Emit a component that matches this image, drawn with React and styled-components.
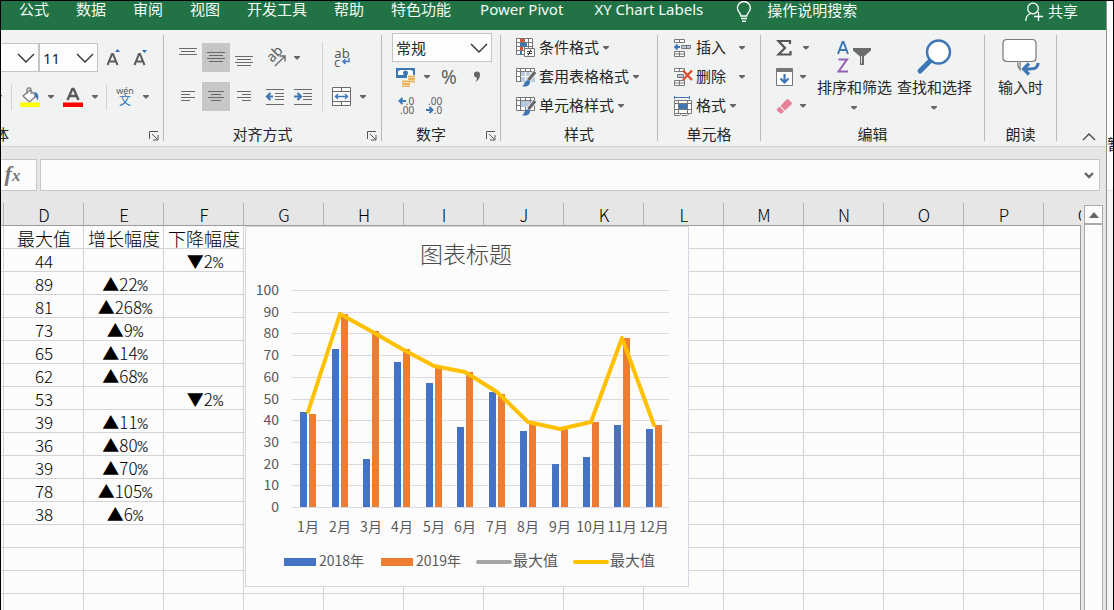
import React, { useState } from "react";
import styled, { createGlobalStyle, css } from "styled-components";

const tabs = ["公式", "数据", "审阅", "视图", "开发工具", "帮助", "特色功能"];
const addIns = ["Power Pivot", "XY Chart Labels"];

const columns = ["D", "E", "F", "G", "H", "I", "J", "K", "L", "M", "N", "O", "P", "Q"];

const months = [
  { name: "1月", y2018: 44, y2019: 43, max: 44, down: "2" },
  { name: "2月", y2018: 73, y2019: 89, max: 89, up: "22" },
  { name: "3月", y2018: 22, y2019: 81, max: 81, up: "268" },
  { name: "4月", y2018: 67, y2019: 73, max: 73, up: "9" },
  { name: "5月", y2018: 57, y2019: 65, max: 65, up: "14" },
  { name: "6月", y2018: 37, y2019: 62, max: 62, up: "68" },
  { name: "7月", y2018: 53, y2019: 52, max: 53, down: "2" },
  { name: "8月", y2018: 35, y2019: 39, max: 39, up: "11" },
  { name: "9月", y2018: 20, y2019: 36, max: 36, up: "80" },
  { name: "10月", y2018: 23, y2019: 39, max: 39, up: "70" },
  { name: "11月", y2018: 38, y2019: 78, max: 78, up: "105" },
  { name: "12月", y2018: 36, y2019: 38, max: 38, up: "6" },
];

const emptyRows = 7;

/* ---------- icons ---------- */

const Caret = () => (
  <svg width="6" height="4" viewBox="0 0 6 4">
    <path d="M0 0h6v1L3.5 3.5h-1L0 1z" fill="#666" />
  </svg>
);

const Chevron = () => (
  <svg width="18" height="10" viewBox="0 0 18 10">
    <path d="M1 1l8 8 8-8" fill="none" stroke="#333" strokeWidth="1.4" />
  </svg>
);

// lines: [x1, x2, y]
const Lines = ({ lines, size = 20 }) => (
  <svg width={size} height="20" viewBox="0 0 20 20">
    {lines.map(([x1, x2, y]) => (
      <path key={y} d={`M${x1} ${y}.5H${x2}`} stroke="#6a6a6a" />
    ))}
  </svg>
);

const LauncherIcon = () => (
  <svg width="10" height="10" viewBox="0 0 10 10" fill="none" stroke="#555">
    <path d="M.5 8V.5H9M3 3l5.5 5.5M9 4v5H4" />
  </svg>
);

const BulbIcon = () => (
  <svg width="16" height="22" viewBox="0 0 16 22" fill="none" stroke="#fff" strokeWidth="1.4">
    <path d="M5 15c0-3-3.6-4-3.6-8a6.5 6.5 0 0 1 13 0c0 4-3.600 5-3.600 8zM5 17.500h6M6 20.300h4" />
  </svg>
);

const PersonIcon = () => (
  <svg width="18" height="20" viewBox="0 0 18 20" fill="none" stroke="#fff" strokeWidth="1.3">
    <circle cx="8" cy="7.500" r="5.300" />
    <path d="M.8 20c0-4 2-6.500 4.700-7.500M13.500 11v9M9 15.500h9" />
  </svg>
);

const FontSizeIcon = ({ grow }) => (
  <svg width="15" height="20" viewBox="0 0 15 20">
    <path d="M1.500 17L6 6h1l4.500 11M3.300 13.500h6.500" fill="none" stroke="#5c5c5c" strokeWidth="2" />
    <path d={grow ? "M9 4l2.500-3L14 4z" : "M9 2h5l-2.500 3z"} fill="#2f6fb5" />
  </svg>
);

const BucketIcon = () => (
  <svg width="20" height="20" viewBox="0 0 20 20">
    <path d="M3 9l7-6 6 6-6.500 6z" fill="#fff" stroke="#777" strokeWidth="1.200" />
    <path d="M7 7V2.500C7 .3 11 .3 11 2.500V7" fill="none" stroke="#777" strokeWidth="1.200" />
    <path d="M14 5c4 0 5.500 4 3.500 9-.5-3-1.500-4-3.500-4.500l1.500-1z" fill="#3f77b5" />
    <path d="M0 15.500h20v4.500H0z" fill="#ff0" />
  </svg>
);

const FontColorIcon = () => (
  <svg width="20" height="20" viewBox="0 0 20 20">
    <path d="M4.500 13L9.300 2h1.400l4.800 11M6.500 9h7" fill="none" stroke="#5a5a5a" strokeWidth="2.400" />
    <path d="M0 15.500h20v4.500H0z" fill="red" />
  </svg>
);

const OrientationIcon = () => (
  <svg width="20" height="20" viewBox="0 0 20 20" fill="none" stroke="#6a6a6a" strokeWidth="1.400">
    <text x="0" y="0" transform="translate(6 15) rotate(-45)" fontSize="14" fill="#5c5c5c" stroke="none">
      ab
    </text>
    <path d="M9 18L18.500 8.500M13.500 8h5.500v5.500" />
  </svg>
);

const IndentIcon = ({ right }) => (
  <svg width="20" height="20" viewBox="0 0 20 20">
    <path d="M1 2.500h18M10 6.500h9M10 9.500h9M10 12.500h9M1 17.500h18" stroke="#6a6a6a" />
    <path
      d={right ? "M1 9.500h6M4.500 6l3.500 3.500-3.500 3.500" : "M8 9.500H2M5.500 6L2 9.500 5.500 13"}
      fill="none"
      stroke="#3f77b5"
      strokeWidth="2.200"
    />
  </svg>
);

const ReturnIcon = () => (
  <svg width="9" height="8" viewBox="0 0 9 8" fill="none" stroke="#3f77b5" strokeWidth="1.400">
    <path d="M8 0v3.500H2M4.500 1L2 3.500 4.500 6" />
  </svg>
);

const MergeIcon = () => (
  <svg width="20" height="20" viewBox="0 0 20 20" fill="none" stroke="#6a6a6a">
    <path d="M.5.500h18v18H.5zM.5 4.500h18M.5 14.500h18M9.500 0v4M9.500 15v4" fill="#fbfbfb" />
    <path d="M3 9.500h13M6 7L3.500 9.500 6 12M13 7l2.500 2.500L13 12" stroke="#3f77b5" strokeWidth="1.400" />
  </svg>
);

const MoneyIcon = () => (
  <svg width="20" height="20" viewBox="0 0 20 20">
    <path d="M0 1h19v10H0z" fill="#3f77b5" />
    <path d="M2 4c1.500 0 2-1 2-1h11s.5 1 2 1v4H2z" fill="#fff" />
    <circle cx="9.500" cy="6" r="2.500" fill="#3f77b5" />
    <path d="M11 8h8v8h-3v4H6v-7h5z" fill="#f5f5f3" />
    <path d="M12 9.500h7M12 12h7M12 14.500h7M6 14.500h8M6 17h8M6 19.300h8" stroke="#e9b45c" strokeWidth="1.800" />
  </svg>
);

const DecimalArrow = ({ right }) => (
  <svg width="8" height="8" viewBox="0 0 8 8" fill="none" stroke="#3f77b5" strokeWidth="2">
    <path d={right ? "M0 4h6M3.500 1l3 3-3 3" : "M8 4H2M4.500 1l-3 3 3 3"} />
  </svg>
);

const ConditionalIcon = () => (
  <svg width="20" height="20" viewBox="0 0 20 20" fill="none" stroke="#777">
    <path d="M.5.500h16v16H.5zM4.500 0v17M.5 4.500h16M.5 8.500h16M.5 12.500h16M8.500 0v17M12.500 0v17" fill="#fff" />
    <path d="M4 1h4v3H4zM4 9h3v3.500H4z" fill="#d35230" stroke="none" />
    <path d="M4 5h7v3.500H4zM4 13h2v3.500H4z" fill="#3f77b5" stroke="none" />
    <path d="M8.500 10.500h10v8h-10z" fill="#fff" />
    <path d="M11 13.500h5M11 15.500h5M12 17.500l3-6" stroke="#444" />
  </svg>
);

const BrushTableIcon = ({ block }) => (
  <svg width="20" height="20" viewBox="0 0 20 20" fill="none">
    <path d="M.5 1.500h18v13H.5zM.5 4.500h18M.5 9.500h18M4.500 1v13M9.500 1v13M14.500 1v13" fill="#fff" stroke="#777" />
    <path d={block ? "M5 5h9v6H5z" : "M5 5h14v10H5z"} fill="#b9c9e0" />
    {!block && <path d="M5 9.500h14M9.500 5v9M14.500 5v9" stroke="#fff" />}
    <path d="M19 5l-6.500 8" stroke="#f1f3f2" strokeWidth="5" />
    <path d="M19 5l-6.500 8" stroke="#666" strokeWidth="3" />
    <path d="M12.500 13c2 1 2 3 .5 5-2 2-5 1.500-7 1.200 2.500-1 2-5.500 6.500-6.200z" fill="#3f77b5" />
  </svg>
);

const InsertIcon = () => (
  <svg width="20" height="20" viewBox="0 0 20 20" fill="#fff" stroke="#777">
    <path d="M1.500 1.500h10v3h-10zM6.500 1.500v3M1.500 13.500h10v5h-10zM6.500 13.500v5M1.500 16h10" />
    <path d="M8.500 7.500h9v3h-9zM13.500 7.500v3" fill="#b9c9e0" />
    <path d="M7 9H2M4.500 6.500L2 9l2.500 2.500" fill="none" stroke="#3f77b5" strokeWidth="1.800" />
  </svg>
);

const DeleteIcon = () => (
  <svg width="20" height="20" viewBox="0 0 20 20" fill="#fff" stroke="#777">
    <path d="M1.500 1.500h10v3h-10zM6.500 1.500v3M1.500 13.500h10v5h-10zM6.500 13.500v5M1.500 16h10" />
    <path d="M4.500 7.500h6v3h-6z" fill="#b9c9e0" />
    <path d="M10 3.500l9 9.500M19 3.500L10 13" stroke="#d94a2b" strokeWidth="2.200" />
  </svg>
);

const FormatIcon = () => (
  <svg width="20" height="20" viewBox="0 0 20 20" fill="#fff" stroke="#777">
    <path d="M1.500 4.500h17v13h-17zM5.500 4v14M14.500 4v14M1.500 7.500h17M1.500 13.500h17M1.500 17.500v2h5l2-2M9 19.500h5l2-2" />
    <path d="M6 8h8v5H6z" fill="#3f77b5" stroke="none" />
    <path d="M2 1.500h14M1.500 0v3M16.500 0v3" stroke="#3f77b5" />
  </svg>
);

const SigmaIcon = () => (
  <svg width="16" height="18" viewBox="0 0 16 18">
    <path d="M14 5V2H2.500L9 9l-6.500 6.500H14.500V12" fill="none" stroke="#555" strokeWidth="2.200" />
  </svg>
);

const FillIcon = () => (
  <svg width="17" height="18" viewBox="0 0 17 18">
    <path d="M.5.500h16v17H.5z" fill="#fff" stroke="#777" />
    <path d="M1 1h15v3H1z" fill="#777" />
    <path d="M8.500 6v8M4.500 10.500l4 4 4-4" fill="none" stroke="#3f77b5" strokeWidth="2.200" />
  </svg>
);

const EraserIcon = () => (
  <svg width="17" height="16" viewBox="0 0 17 16">
    <path d="M10.500 1.500q1-1 2 0l3 3q1 1 0 2L9 12.500 4.500 8z" fill="#e8829a" />
    <path d="M3.800 8.800L8.200 13.200 6 15.200q-1 .6-2 0L1 12.500q-.8-1 0-1.800z" fill="#e8829a" />
  </svg>
);

const SortFilterIcon = () => (
  <svg width="36" height="34" viewBox="0 0 36 34" fill="none">
    <path d="M2 14L6.500 2h1L12 14M3.600 10h7" stroke="#3f77b5" strokeWidth="2" />
    <path d="M2.500 19.500h8.500L2.500 31.500h9.500" stroke="#9460b8" strokeWidth="2" />
    <path d="M17 8h18v2.500l-7 6V25h-4v-8.500l-7-6z" fill="#6b6b6b" />
    <path d="M25.500 16v7.500" stroke="#ddd" />
  </svg>
);

const SearchIcon = () => (
  <svg width="36" height="36" viewBox="0 0 36 36" fill="none" stroke="#3f77b5">
    <path d="M14.500 21.500L4 32" strokeWidth="5" strokeLinecap="round" />
    <circle cx="22.500" cy="13" r="11.500" fill="#fff" strokeWidth="2.400" />
  </svg>
);

const SpeakIcon = () => (
  <svg width="40" height="38" viewBox="0 0 40 38" fill="none">
    <path
      d="M6 1.500h25q4 0 4 4v14q0 4-4 4H19v8l-2-3v-5H6q-4 0-4-4v-14q0-4 4-4z"
      fill="#fff"
      stroke="#777"
      strokeWidth="1.200"
    />
    <path d="M37 25c0 5-3 6.500-8 6.500h-5" stroke="#f1f3f2" strokeWidth="6" />
    <path d="M37 25c0 5-3 6-8 6h-5M28 25.500L22.500 31l5.500 5.500" stroke="#3f77b5" strokeWidth="3.200" />
  </svg>
);

/* ---------- chart ---------- */

const plot = { left: 47, right: 424, bottom: 281, unit: 2.17 };
const step = (plot.right - plot.left) / months.length;
const px = (i) => Math.ceil(plot.left + step * (i + 0.5));
const py = (v) => Math.round(plot.bottom - v * plot.unit);

const Chart = () => (
  <ChartBox viewBox="0 0 444 361" role="img" aria-label="图表标题">
    <rect x="0.5" y="0.5" width="443" height="360" fill="#fcfcfc" stroke="#d9d5e4" />
    <ChartTitle x="221" y="37">
      图表标题
    </ChartTitle>
    {[0, 10, 20, 30, 40, 50, 60, 70, 80, 90, 100].map((v) => (
      <g key={v}>
        <path d={`M${plot.left} ${py(v) + 0.5}H${plot.right}`} stroke="#dcd9e6" />
        <AxisText x="34" y={py(v) + 5} $anchor="end">
          {v}
        </AxisText>
      </g>
    ))}
    {months.map((m, i) => (
      <g key={m.name}>
        <rect x={px(i) - 8} y={py(m.y2018)} width="7" height={plot.bottom - py(m.y2018)} fill="#4472c4" />
        <rect x={px(i) + 1} y={py(m.y2019)} width="7" height={plot.bottom - py(m.y2019)} fill="#ed7d31" />
        <AxisText x={px(i)} y="306">
          {m.name}
        </AxisText>
      </g>
    ))}
    <polyline
      points={months.map((m, i) => `${px(i)},${py(m.max)}`).join(" ")}
      fill="none"
      stroke="#ffc000"
      strokeWidth="4"
      strokeLinejoin="round"
      strokeLinecap="round"
    />
    <rect x="39" y="332" width="32" height="8" fill="#4472c4" />
    <AxisText x="74" y="340" $anchor="start">2018年</AxisText>
    <rect x="136" y="332" width="32" height="8" fill="#ed7d31" />
    <AxisText x="171" y="340" $anchor="start">2019年</AxisText>
    <path d="M233 336h32" stroke="#a5a5a5" strokeWidth="4" strokeLinecap="round" />
    <LegendText x="268" y="340">最大值</LegendText>
    <path d="M330 336h32" stroke="#ffc000" strokeWidth="4" strokeLinecap="round" />
    <LegendText x="365" y="340">最大值</LegendText>
  </ChartBox>
);

/* ---------- page ---------- */

const Group = ({ label, launcher, width, children }) => (
  <GroupBox $width={width}>
    <GroupBody>{children}</GroupBody>
    <GroupFooter>
      <GroupLabel>{label}</GroupLabel>
      {launcher && (
        <Launcher aria-label="更多设置">
          <LauncherIcon />
        </Launcher>
      )}
    </GroupFooter>
  </GroupBox>
);

const Change = ({ sign, value }) =>
  value ? (
    <>
      <Mark>{sign}</Mark>
      {value}
      <Percent>%</Percent>
    </>
  ) : null;

const App = () => {
  const [formula, setFormula] = useState("");
  const [size, setSize] = useState("11");
  const [format, setFormat] = useState("常规");

  return (
    <Screen>
      <GlobalStyle />
      <Window>
        <TabBar>
          {tabs.map((tab) => (
            <Tab key={tab}>{tab}</Tab>
          ))}
          {addIns.map((tab) => (
            <Tab key={tab} $wide>{tab}</Tab>
          ))}
          <TellMe>
            <BulbIcon />
            操作说明搜索
          </TellMe>
          <Share>
            <PersonIcon />
            共享
          </Share>
        </TabBar>

        <Ribbon>
          <Group label={<Clipped>体</Clipped>} launcher width={162}>
            <FontRows>
              <Row>
                <SelectBox $width={38} $flush>
                  <Select aria-label="字体" />
                  <Chevron />
                </SelectBox>
                <SelectBox $width={59}>
                  <Select aria-label="字号" value={size} onChange={(e) => setSize(e.target.value)}>
                    <option>11</option>
                    <option>12</option>
                  </Select>
                  <Chevron />
                </SelectBox>
                <Tool $width={30} aria-label="增大字号"><FontSizeIcon grow /></Tool>
                <Tool $width={24} aria-label="减小字号"><FontSizeIcon /></Tool>
              </Row>
              <Row>
                <Tool $width={10} aria-label="边框" $clipped><Caret /></Tool>
                <ShortRule />
                <Tool $width={36} aria-label="填充颜色"><BucketIcon /></Tool>
                <Tool $width={6} aria-label="填充颜色选项"><Caret /></Tool>
                <Tool $width={38} aria-label="字体颜色"><FontColorIcon /></Tool>
                <Tool $width={6} aria-label="字体颜色选项"><Caret /></Tool>
                <Spacer $width={8} />
                <ShortRule />
                <Tool $width={36} aria-label="拼音">
                  <Pinyin>
                    wén<b>文</b>
                  </Pinyin>
                </Tool>
                <Tool $width={6} aria-label="拼音选项"><Caret /></Tool>
              </Row>
            </FontRows>
          </Group>
          <Separator />

          <Group label="对齐方式" launcher width={217}>
            <AlignRows>
              <Row>
                <Tool aria-label="顶端对齐"><Lines lines={[[1, 19, 0], [3, 17, 3], [1, 19, 6]]} /></Tool>
                <Tool $active aria-label="垂直居中"><Lines lines={[[1, 19, 4], [3, 17, 7], [1, 19, 10], [3, 17, 13]]} /></Tool>
                <Tool aria-label="底端对齐"><Lines lines={[[1, 19, 8], [3, 17, 11], [1, 19, 14], [3, 17, 17]]} /></Tool>
                <Tool $width={36} aria-label="方向"><OrientationIcon /></Tool>
                <Tool $width={6} aria-label="方向选项"><Caret /></Tool>
              </Row>
              <Row>
                <Tool aria-label="左对齐"><Lines lines={[[3, 17, 4], [3, 12, 7], [3, 17, 10], [3, 12, 13]]} /></Tool>
                <Tool $active aria-label="居中"><Lines lines={[[2, 18, 4], [5, 15, 7], [2, 18, 10], [5, 15, 13]]} /></Tool>
                <Tool aria-label="右对齐"><Lines lines={[[3, 17, 4], [8, 17, 7], [3, 17, 10], [8, 17, 13]]} /></Tool>
                <Tool $width={34} aria-label="减少缩进量"><IndentIcon /></Tool>
                <Tool $width={22} aria-label="增加缩进量"><IndentIcon right /></Tool>
              </Row>
            </AlignRows>
            <TallRule />
            <WrapRows>
              <Row>
                <Tool $width={38} aria-label="自动换行">
                  <WrapText>
                    ab
                    <span>
                      c<ReturnIcon />
                    </span>
                  </WrapText>
                </Tool>
              </Row>
              <Row>
                <Tool $width={38} aria-label="合并后居中"><MergeIcon /></Tool>
                <Tool $width={4} aria-label="合并选项"><Caret /></Tool>
              </Row>
            </WrapRows>
          </Group>
          <Separator />

          <Group label="数字" launcher width={118}>
            <NumberRows>
              <SelectBox $width={100}>
                <Select aria-label="数字格式" value={format} onChange={(e) => setFormat(e.target.value)}>
                  <option>常规</option>
                  <option>数值</option>
                </Select>
                <Chevron />
              </SelectBox>
              <Row>
                <Tool aria-label="会计数字格式"><MoneyIcon /></Tool>
                <Tool $width={14} aria-label="货币选项"><Caret /></Tool>
                <Tool $width={30} $size={19}>%</Tool>
                <Tool $width={26} aria-label="千位分隔样式">
                  <svg width="8" height="12" viewBox="0 0 8 12">
                    <path d="M1 3.500a3 3 0 0 1 6 0C7 7 5 10 2 11c1.500-1.500 2-3 1.800-4.500A3 3 0 0 1 1 3.500z" fill="#666" />
                  </svg>
                </Tool>
              </Row>
              <Row>
                <Tool aria-label="增加小数位数">
                  <Decimals>
                    <span><DecimalArrow />.0</span>
                    <span>.00</span>
                  </Decimals>
                </Tool>
                <Tool aria-label="减少小数位数">
                  <Decimals>
                    <span>.00</span>
                    <span><DecimalArrow right />.0</span>
                  </Decimals>
                </Tool>
              </Row>
            </NumberRows>
          </Group>
          <Separator />

          <Group label="样式" width={156}>
            <Commands>
              <Command $caretGap={1}><ConditionalIcon />条件格式<Caret /></Command>
              <Command $caretGap={1}><BrushTableIcon />套用表格格式<Caret /></Command>
              <Command $caretGap={1}><BrushTableIcon block />单元格样式<Caret /></Command>
            </Commands>
          </Group>
          <Separator />

          <Group label="单元格" width={102}>
            <Commands>
              <Command $caretGap={10}><InsertIcon />插入<Caret /></Command>
              <Command $caretGap={10}><DeleteIcon />删除<Caret /></Command>
              <Command $caretGap={1}><FormatIcon />格式<Caret /></Command>
            </Commands>
          </Group>
          <Separator />

          <Group label="编辑" width={223}>
            <Commands>
              <Command $caretGap={8} aria-label="求和"><SigmaIcon /><Caret /></Command>
              <Command $caretGap={4} aria-label="填充"><FillIcon /><Caret /></Command>
              <Command $caretGap={4} aria-label="清除"><EraserIcon /><Caret /></Command>
            </Commands>
            <BigButtons>
              <BigButton><SortFilterIcon /><span>排序和筛选</span><Caret /></BigButton>
              <BigButton><SearchIcon /><span>查找和选择</span><Caret /></BigButton>
            </BigButtons>
          </Group>
          <Separator />

          <Group label="朗读" width={71}>
            <BigButton $fill><SpeakIcon /><span>输入时</span></BigButton>
          </Group>
          <Separator />

          <Collapse aria-label="折叠功能区">
            <svg width="14" height="8" viewBox="0 0 14 8">
              <path d="M1 7l6-6 6 6" fill="none" stroke="#444" strokeWidth="1.300" />
            </svg>
          </Collapse>
        </Ribbon>

        <FormulaBar>
          <FunctionButton aria-label="插入函数">
            <i>f</i>
            <small>x</small>
          </FunctionButton>
          <FormulaField>
            <FormulaInput aria-label="编辑栏" value={formula} onChange={(e) => setFormula(e.target.value)} />
            <svg width="10" height="7" viewBox="0 0 10 7">
              <path d="M1 1l4 4 4-4" fill="none" stroke="#666" strokeWidth="2.400" />
            </svg>
          </FormulaField>
        </FormulaBar>

        <Workspace>
          <Sheet>
            <Table>
              <colgroup>
                <Col $width={3} />
                {columns.map((c) => (
                  <Col key={c} $width={80} />
                ))}
              </colgroup>
              <thead>
                <tr>
                  <Head />
                  {columns.map((c) => (
                    <Head key={c} scope="col">{c}</Head>
                  ))}
                </tr>
              </thead>
              <tbody>
                <tr>
                  <Cell />
                  <Cell $title>最大值</Cell>
                  <Cell $title>增长幅度</Cell>
                  <Cell $title>下降幅度</Cell>
                  {columns.slice(3).map((c) => (
                    <Cell key={c} />
                  ))}
                </tr>
                {months.map((m) => (
                  <tr key={m.name}>
                    <Cell />
                    <Cell>{m.max}</Cell>
                    <Cell><Change sign="▲" value={m.up} /></Cell>
                    <Cell><Change sign="▼" value={m.down} /></Cell>
                    {columns.slice(3).map((c) => (
                      <Cell key={c} />
                    ))}
                  </tr>
                ))}
                {Array.from({ length: emptyRows }, (_, r) => (
                  <tr key={r}>
                    <Cell />
                    {columns.map((c) => (
                      <Cell key={c} />
                    ))}
                  </tr>
                ))}
              </tbody>
            </Table>
            <Chart />
          </Sheet>
          <ScrollBar>
            <ScrollUp aria-label="向上滚动">
              <svg width="10" height="6" viewBox="0 0 10 6">
                <path d="M0 6l5-6 5 6z" fill="#666" />
              </svg>
            </ScrollUp>
            <Track />
          </ScrollBar>
        </Workspace>
      </Window>
      <Behind>
        <BehindTop>暂</BehindTop>
      </Behind>
    </Screen>
  );
};

const GlobalStyle = createGlobalStyle`
  *, *::before, *::after { box-sizing: border-box; }
  body {
    margin: 0;
    font-family: "Noto Sans", "Noto Sans CJK SC", sans-serif;
    font-size: 15px;
    color: #262626;
  }
  button, select, input {
    font: inherit;
    color: inherit;
    margin: 0;
    padding: 0;
    border: 0;
    background: none;
  }
  svg { display: block; flex: none; }
`;

const Screen = styled.div`
  display: flex;
  height: 100vh;
  overflow: hidden;
  border: solid #000;
  border-width: 1px 1px 0;
  background: #e6e6e6;
`;

const Window = styled.div`
  flex: 1;
  min-width: 0;
  display: flex;
  flex-direction: column;
`;

const TabBar = styled.nav`
  flex: none;
  display: flex;
  align-items: flex-start;
  gap: 27px;
  height: 29px;
  padding: 0 28px 0 18px;
  background: #217346;
  color: #f4fbf6;
`;

const Tab = styled.button`
  padding: 0 ${(p) => (p.$wide ? 2 : 0)}px;
  line-height: 16px;
  white-space: nowrap;
`;

const TellMe = styled(Tab)`
  display: flex;
  gap: 15px;
  margin-left: 4px;
  line-height: 18px;
`;

const Share = styled(Tab)`
  display: flex;
  gap: 5px;
  margin-left: auto;
  line-height: 20px;
`;

const Ribbon = styled.div`
  flex: none;
  display: flex;
  height: 117px;
  padding: 3px 0 5px;
  background: #f1f3f2;
  border-bottom: 1px solid #d8cfe2;
`;

const GroupBox = styled.section`
  flex: none;
  width: ${(p) => p.$width}px;
  display: flex;
  flex-direction: column;
`;

const GroupBody = styled.div`
  flex: 1;
  display: flex;
`;

const GroupFooter = styled.div`
  display: flex;
  align-items: center;
  height: 14px;
`;

const GroupLabel = styled.span`
  flex: 1;
  text-align: center;
  line-height: 16px;
`;

const Clipped = styled.span`
  display: flex;
  justify-content: flex-end;
  width: 8px;
  overflow: hidden;
  white-space: nowrap;
`;

const Launcher = styled.button`
  margin: 4px 4px 0 6px;
`;

const Separator = styled.div`
  flex: none;
  width: 1px;
  margin-top: 2px;
  background: #b9b9b9;
`;

const Row = styled.div`
  display: flex;
  align-items: center;
  height: 29px;
`;

const FontRows = styled.div`
  display: flex;
  flex-direction: column;
  gap: 10px;
  padding-top: 10px;
`;

const AlignRows = styled(FontRows)`
  padding-left: 10px;
  width: 158px;
`;

const WrapRows = FontRows;

const NumberRows = styled.div`
  padding-left: 10px;
`;

const Tool = styled.button`
  flex: none;
  display: flex;
  align-items: center;
  justify-content: center;
  width: ${(p) => p.$width || 28}px;
  height: 29px;
  font-size: ${(p) => p.$size || 15}px;
  color: #5c5c5c;
  ${(p) =>
    p.$active &&
    css`
      background: #c6c6c6;
    `}
  ${(p) =>
    p.$clipped &&
    css`
      justify-content: flex-end;
      padding-right: 9px;
      overflow: hidden;
    `}
`;

const Spacer = styled.span`
  width: ${(p) => p.$width}px;
`;

const ShortRule = styled.span`
  width: 1px;
  height: 26px;
  background: #d3d0d8;
`;

const TallRule = styled.span`
  width: 1px;
  margin: 9px 0 16px;
  background: #d3d0d8;
`;

const SelectBox = styled.div`
  flex: none;
  display: flex;
  align-items: center;
  width: ${(p) => p.$width}px;
  height: 29px;
  padding: 0 3px;
  border: 1px solid #c4c4c4;
  border-left-width: ${(p) => (p.$flush ? 0 : 1)}px;
  background: #fdfdfd;

  svg {
    pointer-events: none;
  }
`;

const Select = styled.select`
  flex: 1;
  min-width: 0;
  appearance: none;
  outline: none;
`;

const Pinyin = styled.span`
  display: flex;
  flex-direction: column;
  align-items: center;
  font-size: 9px;
  line-height: 9px;

  b {
    font-size: 12px;
    font-weight: 400;
    line-height: 12px;
    color: #2f6fb5;
  }
`;

const WrapText = styled.span`
  display: flex;
  flex-direction: column;
  font-size: 13px;
  line-height: 9px;

  span {
    display: flex;
    align-items: center;
    gap: 1px;
  }
`;

const Decimals = styled.span`
  display: flex;
  flex-direction: column;
  align-items: flex-end;
  font-size: 10px;
  line-height: 9px;

  span {
    display: flex;
    align-items: center;
  }
`;

const Commands = styled.div`
  padding-left: 15px;
`;

const Command = styled.button`
  display: flex;
  align-items: center;
  gap: 3px;
  height: 29px;
  line-height: 29px;
  white-space: nowrap;

  svg:last-child {
    margin-left: ${(p) => p.$caretGap}px;
  }
`;

const BigButtons = styled.div`
  display: flex;
  gap: 5px;
  margin-left: auto;
  padding-right: 12px;
`;

const BigButton = styled.button`
  display: grid;
  grid-template-rows: 38px 22px 14px;
  align-content: start;
  align-items: center;
  justify-items: center;
  padding-top: 5px;
  width: ${(p) => (p.$fill ? "100%" : "auto")};
  line-height: 22px;
  white-space: nowrap;

  svg:last-child {
    margin-top: 6px;
  }
`;

const Collapse = styled.button`
  margin-left: auto;
  padding: 0 10px;
  align-self: flex-end;
`;

const FormulaBar = styled.div`
  flex: none;
  display: flex;
  gap: 3px;
  padding: 12px 6px 12px 0;
`;

const FunctionButton = styled.button`
  width: 36px;
  height: 32px;
  padding-right: 12px;
  border: 1px solid #c6c6c6;
  border-left: 0;
  background: #fcfcfc;
  color: #757575;
  font-family: "Liberation Serif", serif;
  font-size: 22px;
  font-style: italic;
  font-weight: 700;
  line-height: 28px;

  small {
    font-size: 17px;
  }
`;

const FormulaField = styled.div`
  flex: 1;
  display: flex;
  align-items: center;
  height: 32px;
  padding-right: 5px;
  border: 1px solid #c6c6c6;
  background: #fcfcfc;
`;

const FormulaInput = styled.input`
  flex: 1;
  padding: 0 6px;
  outline: none;
`;

const Workspace = styled.main`
  flex: 1;
  min-height: 0;
  display: flex;
`;

const Sheet = styled.div`
  position: relative;
  flex: 1;
  min-width: 0;
  overflow: hidden;

  &::after {
    content: "";
    position: absolute;
    top: 22px;
    right: 0;
    bottom: 0;
    width: 1px;
    background: #9b9b9b;
  }
`;

const Table = styled.table`
  table-layout: fixed;
  width: 1123px;
  border-collapse: separate;
  border-spacing: 0;
  font-family: "Noto Sans CJK SC", sans-serif;
  font-size: 17px;
  font-weight: 300;
  color: #000;
`;

const Col = styled.col`
  width: ${(p) => p.$width}px;
`;

const Head = styled.th`
  height: 23px;
  padding: 2px 0 0 1px;
  border-bottom: 1px solid #9b9b9b;
  border-right: 1px solid #b4b4b4;
  background: #e6e6e6;
  font-weight: inherit;
  line-height: 20px;
`;

const Cell = styled.td`
  height: 23px;
  padding: 2px 0 0 1px;
  border-right: 1px solid #d4d4d4;
  border-bottom: 1px solid #d4d4d4;
  background: #fcfcfc;
  font-size: ${(p) => (p.$title ? 18 : 17)}px;
  line-height: 20px;
  text-align: center;
  white-space: nowrap;
`;

const Mark = styled.span`
  padding-left: 2px;
  font-size: 17px;
  line-height: 1px;
`;

const Percent = styled.span`
  font-family: "Liberation Mono", monospace;
  font-size: 17px;
  line-height: 1px;
  color: #444;
`;

// floats over the cells, anchored where column G starts
const ChartBox = styled.svg`
  position: absolute;
  left: 244px;
  top: 23px;
  width: 444px;
  height: 361px;
`;

const ChartTitle = styled.text`
  font-family: "Noto Sans CJK SC", sans-serif;
  font-size: 23px;
  font-weight: 300;
  text-anchor: middle;
  fill: #4a4a4a;
`;

const AxisText = styled.text`
  font-family: "Noto Sans CJK SC", sans-serif;
  font-size: 14px;
  text-anchor: ${(p) => p.$anchor || "middle"};
  fill: #595959;
`;

const LegendText = styled(AxisText)`
  font-size: 15px;
  text-anchor: start;
`;

const ScrollBar = styled.div`
  flex: none;
  display: flex;
  flex-direction: column;
  width: 19px;
  margin: 2px 3px 0;
`;

const ScrollUp = styled.button`
  display: flex;
  align-items: center;
  justify-content: center;
  height: 19px;
  border: 1px solid #ababab;
  background: #fcfcfc;
`;

const Track = styled.div`
  flex: 1;
  border: solid #ababab;
  border-width: 1px 1px 0;
  background: #fcfcfc;
`;

const Behind = styled.aside`
  flex: none;
  width: 7px;
  overflow: hidden;
  border-left: 1px solid #8f8f8f;
  background: #f5f6f4;
`;

const BehindTop = styled.div`
  height: 190px;
  padding-top: 133px;
  background: #fdfdfd;
  border-bottom: 1px solid #e2e2e2;
  line-height: 20px;
`;

export default App;
